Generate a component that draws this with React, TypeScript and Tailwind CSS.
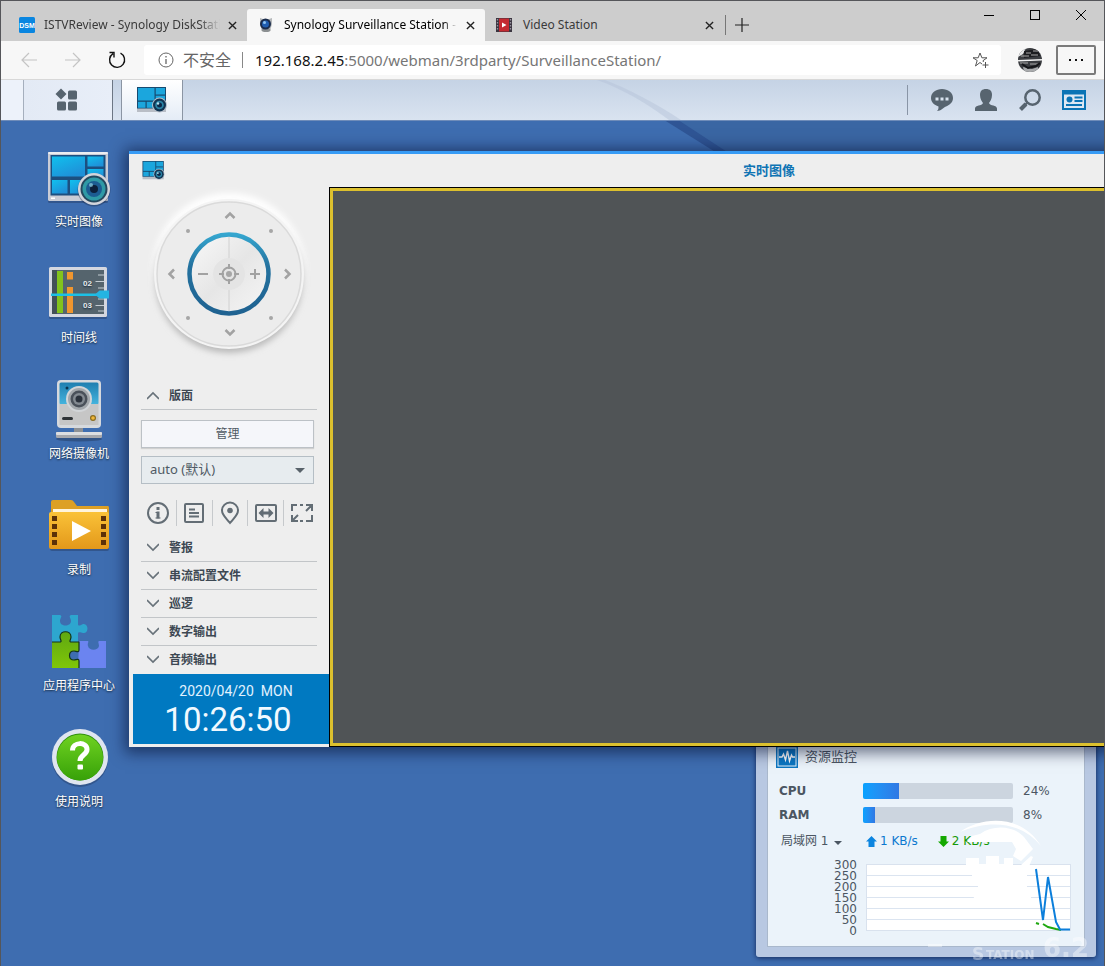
import { useState, type ReactNode } from "react";

const noto = "font-['Noto_Sans','Noto_Sans_CJK_SC',sans-serif]";
const verdana = "font-['DejaVu_Sans','Noto_Sans_CJK_SC',sans-serif]";

function CloseIcon() {
  return (
    <svg viewBox="0 0 10 10" className="h-[9px] w-[9px]" stroke="#222" strokeWidth="1.5">
      <path d="M1 1l8 8M9 1l-8 8" />
    </svg>
  );
}

function DsmIcon() {
  return (
    <svg viewBox="0 0 16 16" className="h-4 w-4 shrink-0">
      <rect width="16" height="16" rx="1.500" fill="#0a86e0" />
      <text x="8" y="10.500" textAnchor="middle" fill="#fff" className="font-['Liberation_Sans',sans-serif] text-[7px] font-bold">DSM</text>
    </svg>
  );
}

function LensIcon() {
  return (
    <svg viewBox="0 0 16 16" className="h-4 w-4 shrink-0">
      <path d="M2 1l3 1h6l3-1v6l-2 7H4L2 7z" fill="#b5b8ba" />
      <ellipse cx="8" cy="13" rx="4.500" ry="2" fill="#8c9092" />
      <circle cx="7.500" cy="7" r="5.500" fill="#1b2c4b" />
      <circle cx="7.500" cy="7" r="3.500" fill="#1f5db0" />
      <circle cx="6.500" cy="5.500" r="1.500" fill="#8fc4f2" />
    </svg>
  );
}

function FilmIcon() {
  return (
    <svg viewBox="0 0 16 14" className="h-[14px] w-4 shrink-0">
      <rect width="16" height="14" fill="#3b3540" />
      <rect x="3" y="0.500" width="10" height="13" fill="#c42a31" />
      <path d="M6 4.500v5l4.500-2.500z" fill="#fff" />
      <path d="M1.500 1v12M14.500 1v12" stroke="#9a94a0" strokeWidth="1.300" strokeDasharray="1.500 1.500" />
    </svg>
  );
}

function LiveViewArt({ className }: { className: string }) {
  return (
    <svg viewBox="0 0 64 64" className={className}>
      <defs>
        <linearGradient id="liveBlue" x1="0" y1="0" x2="0.600" y2="1">
          <stop offset="0" stopColor="#10c0ee" />
          <stop offset="1" stopColor="#1f90d8" />
        </linearGradient>
      </defs>
      <rect x="1" y="7" width="60" height="49" rx="1.500" fill="#1c2c4c" opacity="0.350" />
      <rect x="1" y="5" width="60" height="49" rx="1.500" fill="#c9ccd6" />
      <rect x="1" y="5" width="60" height="2" rx="1" fill="#eceef2" />
      <rect x="3.500" y="8" width="55" height="40.500" fill="#1c4f80" />
      <g fill="url(#liveBlue)">
        <rect x="5" y="9.500" width="33" height="20" />
        <rect x="40.500" y="9.500" width="16" height="10" />
        <rect x="40.500" y="22" width="16" height="8" />
        <rect x="5" y="33" width="15.500" height="13.500" />
        <rect x="23" y="33" width="15" height="13.500" />
      </g>
      <rect x="4" y="50.500" width="4" height="1.500" fill="#fff" />
      <circle cx="47" cy="43" r="16.500" fill="#1c2c4c" opacity="0.400" />
      <circle cx="47" cy="42" r="16" fill="#d3d5dc" />
      <circle cx="47" cy="42" r="13.500" fill="#24495f" />
      <circle cx="47" cy="42" r="11.500" fill="#2f9aa6" />
      <circle cx="47" cy="42" r="8" fill="#1c5c92" />
      <circle cx="47" cy="42" r="4" fill="#0c1f3a" />
      <circle cx="44" cy="38" r="2" fill="#a5e4ef" opacity="0.600" />
    </svg>
  );
}

function MiniLiveIcon({ className }: { className: string }) {
  return (
    <svg viewBox="0 0 30 26" className={className}>
      <rect width="29" height="25" fill="#b9bec6" />
      <rect width="29" height="21.500" fill="#174a70" />
      <g fill="#1ba6dd">
        <rect x="1" y="1" width="16.500" height="12.500" />
        <rect x="18.700" y="1" width="9.300" height="6.500" />
        <rect x="18.700" y="8.700" width="9.300" height="5" />
        <rect x="1" y="14.800" width="7.500" height="6" />
        <rect x="9.700" y="14.800" width="7.800" height="6" />
      </g>
      <circle cx="22.500" cy="18" r="7.500" fill="#b5bdc8" />
      <circle cx="22.500" cy="18" r="6.500" fill="#123452" />
      <circle cx="22.500" cy="18" r="4.300" fill="#2a84a6" />
      <circle cx="22.500" cy="18" r="2.500" fill="#0d2848" />
      <circle cx="21" cy="16.500" r="1.200" fill="#b8e2f0" />
    </svg>
  );
}

function TimelineArt() {
  return (
    <svg viewBox="0 0 64 64" className="h-16 w-16">
      <rect x="2" y="6" width="58" height="50" rx="1.500" fill="#1c2c4c" opacity="0.350" />
      <rect x="2" y="4" width="58" height="50" rx="1.500" fill="#d5d8e0" />
      <rect x="5" y="7" width="52" height="44" fill="#55646d" />
      <rect x="5" y="7" width="5" height="44" fill="#435057" />
      <rect x="10" y="8" width="6" height="42" fill="#82c31c" />
      <rect x="20" y="9" width="6" height="7.500" fill="#f0962e" />
      <rect x="20" y="24" width="6" height="26" fill="#f0962e" />
      <path d="M51 12h6M48.500 18.500h8.500M51 25h6M51 36h6M48.500 42.500h8.500M51 48h6" stroke="#c4ccd2" strokeWidth="1" />
      <rect x="4" y="30.500" width="47" height="2.500" fill="#1cc0e6" />
      <path d="M48 31.500l4.500-4h9.500v8h-9.500z" fill="#25b5e2" />
      <g fill="#e8ecee" className="font-['Liberation_Sans',sans-serif] text-[8px] font-bold">
        <text x="36" y="23">02</text>
        <text x="36" y="45">03</text>
      </g>
    </svg>
  );
}

function CameraArt() {
  return (
    <svg viewBox="0 0 64 64" className="h-16 w-16">
      <defs>
        <linearGradient id="camBlue" x1="0" y1="0" x2="0" y2="1">
          <stop offset="0" stopColor="#1f7fb0" />
          <stop offset="1" stopColor="#45b4de" />
        </linearGradient>
      </defs>
      <ellipse cx="32" cy="60" rx="23" ry="2.500" fill="#1c2c4c" opacity="0.400" />
      <rect x="27" y="46" width="9" height="9" fill="#8e9195" />
      <rect x="9" y="53" width="46" height="6" rx="1.500" fill="#a6a8ad" />
      <rect x="9" y="53" width="46" height="3" rx="1" fill="#dcdee1" />
      <rect x="10" y="1" width="44" height="48" rx="4" fill="#d6d9dd" />
      <rect x="12.500" y="3.500" width="39" height="22" rx="1.500" fill="url(#camBlue)" />
      <path d="M12.500 25h39v21h-39z" fill="#c6c6c6" />
      <circle cx="32" cy="20" r="13" fill="#d2d5d8" />
      <circle cx="32" cy="20" r="11" fill="#a3a8ac" />
      <circle cx="32" cy="20" r="8.500" fill="#4a515a" />
      <circle cx="32" cy="20" r="6" fill="#838a91" />
      <circle cx="32" cy="20" r="3.500" fill="#2b323c" />
      <circle cx="20" cy="9" r="1.500" fill="#0b3450" />
      <rect x="15" y="38" width="11" height="3" rx="1.500" fill="#2f3336" />
      <circle cx="46" cy="39" r="3" fill="#8b6c1e" />
      <circle cx="46" cy="39" r="1.800" fill="#f1b83a" />
    </svg>
  );
}

function FolderArt() {
  const holes = [21, 29, 37, 45];
  return (
    <svg viewBox="0 0 64 64" className="h-16 w-16">
      <defs>
        <linearGradient id="folder" x1="0" y1="0" x2="0" y2="1">
          <stop offset="0" stopColor="#fac238" />
          <stop offset="1" stopColor="#e3981a" />
        </linearGradient>
      </defs>
      <rect x="3" y="18" width="59" height="38" rx="2" fill="#1c2c4c" opacity="0.350" />
      <path d="M4 7q0-2 2-2h18q2 0 3 2l3 4h31q1 0 1 2v10H4z" fill="#dda025" />
      <path d="M6 14h54v5H6z" fill="#fff4dc" />
      <path d="M2 19q0-2 2-2h56q2 0 2 2v33q0 2-2 2H4q-2 0-2-2z" fill="url(#folder)" />
      {holes.map((y) => (
        <g key={y} fill="#5c3108">
          <rect x="5" y={y} width="5" height="5" />
          <rect x="54" y={y} width="5" height="5" />
        </g>
      ))}
      <path d="M25 26v20l19-10z" fill="#fff" />
    </svg>
  );
}

function PuzzleArt() {
  return (
    <svg viewBox="0 0 64 64" className="h-16 w-16">
      <defs>
        <linearGradient id="pieceGreen" x1="0" y1="0" x2="0" y2="1">
          <stop offset="0" stopColor="#5fa811" />
          <stop offset="1" stopColor="#7fc608" />
        </linearGradient>
      </defs>
      <path
        d="M5 4h8c3 1 0 3 0 6 0 6 11 6 11 0 0-3-3-5 0-6h7v9c0 3 3 1 5 0 6-1 6 10 0 9-2 0-5-2-5 1v8H5z"
        fill="#2da6cf"
      />
      <path d="M32 30h8c3 0 0 2 1 5 1 5 10 5 11 0 0-3-2-5 1-5h6v27H31z" fill="#6b84f0" />
      <path
        d="M5 31h7c4 0 1-2 1-5 0-7 11-7 11 0 0 3-3 5 1 5h7v8c0 3-3 1-5 1-6 0-6 9 0 9 2 0 5-2 5 1v7H5z"
        fill="url(#pieceGreen)"
      />
      <path d="M5 31h7c4 0 1-2 1-5 0-7 11-7 11 0 0 3-3 5 1 5h7v8c0 3-3 1-5 1-6 0-6 9 0 9 2 0 5-2 5 1v7" fill="none" stroke="#14331c" strokeWidth="1.200" />
    </svg>
  );
}

function HelpArt() {
  return (
    <svg viewBox="0 0 64 64" className="h-16 w-16">
      <defs>
        <linearGradient id="help" x1="0" y1="0" x2="0" y2="1">
          <stop offset="0" stopColor="#6fd221" />
          <stop offset="1" stopColor="#37a108" />
        </linearGradient>
      </defs>
      <circle cx="33" cy="32" r="28" fill="#1c2c4c" opacity="0.350" />
      <circle cx="33" cy="30" r="28" fill="#dfe5f0" />
      <circle cx="33" cy="30" r="23.500" fill="#2f8f0c" />
      <circle cx="33" cy="30.500" r="23" fill="url(#help)" />
      <path d="M25.500 23.500c0-9 14.500-9 14.500-1 0 5.500-7 5-7 11.500" fill="none" stroke="#fff" strokeWidth="5" />
      <rect x="30.500" y="37.500" width="5.500" height="5" rx="1" fill="#fff" />
    </svg>
  );
}

const desktopApps: { label: string; art: ReactNode }[] = [
  { label: "实时图像", art: <LiveViewArt className="h-16 w-16" /> },
  { label: "时间线", art: <TimelineArt /> },
  { label: "网络摄像机", art: <CameraArt /> },
  { label: "录制", art: <FolderArt /> },
  { label: "应用程序中心", art: <PuzzleArt /> },
  { label: "使用说明", art: <HelpArt /> },
];

function TabStrip() {
  return (
    <div className="flex h-[40px] items-end bg-[#cdcdcd] text-[12px] text-[#3a3a3a]">
      <div role="tablist" className="flex h-8 items-center">
        <div className="flex w-[246px] items-center pl-[18px] pr-[10px]">
          <DsmIcon />
          <button role="tab" aria-selected="false" className="ml-[9px] min-w-0 flex-1 overflow-hidden whitespace-nowrap text-left [mask-image:linear-gradient(to_right,black_88%,transparent)]">
            ISTVReview - Synology DiskStatic
          </button>
          <button aria-label="关闭标签页" className="ml-[8px]"><CloseIcon /></button>
        </div>
        <div className="flex h-full w-[238px] items-center rounded-t-[3px] bg-[#f7f7f7] pl-[11px] pr-[10px] text-black">
          <LensIcon />
          <button role="tab" aria-selected="true" className="ml-[10px] min-w-0 flex-1 overflow-hidden whitespace-nowrap text-left [mask-image:linear-gradient(to_right,black_92%,transparent)]">
            Synology Surveillance Station - IS
          </button>
          <button aria-label="关闭标签页" className="ml-[9px]"><CloseIcon /></button>
        </div>
        <div className="flex w-[241px] items-center pl-[11px]">
          <FilmIcon />
          <button role="tab" aria-selected="false" className="ml-[11px] flex-1 text-left">Video Station</button>
          <button aria-label="关闭标签页"><CloseIcon /></button>
          <span className="ml-[11px] h-5 w-px bg-[#777]" />
        </div>
      </div>
      <button aria-label="新建标签页" className="mb-[9px] ml-[9px]">
        <svg viewBox="0 0 14 14" className="h-[14px] w-[14px]" stroke="#222"><path d="M7 0v14M0 7h14" strokeWidth="1.200" /></svg>
      </button>
      <div className="ml-auto flex self-start pt-[8px]">
        <button aria-label="最小化" className="flex w-[46px] justify-center">
          <svg viewBox="0 0 12 12" className="h-3 w-3" stroke="#000"><path d="M1 6.500h10" /></svg>
        </button>
        <button aria-label="最大化" className="flex w-[46px] justify-center">
          <svg viewBox="0 0 12 12" className="h-3 w-3" stroke="#000" fill="none"><rect x="1.500" y="1.500" width="9" height="9" /></svg>
        </button>
        <button aria-label="关闭" className="flex w-[46px] justify-center">
          <svg viewBox="0 0 12 12" className="h-3 w-3" stroke="#000"><path d="M1 1l10 10M11 1L1 11" /></svg>
        </button>
      </div>
    </div>
  );
}

function AddressBar() {
  return (
    <div className="flex h-[39px] items-center border-b border-[#d8d8d8] bg-[#f7f7f7] pr-[8px]">
      <button aria-label="后退" className="ml-[20px]">
        <svg viewBox="0 0 16 16" className="h-4 w-4" fill="none" stroke="#c4c4c4" strokeWidth="1.200"><path d="M16 8H1M8 1L1 8l7 7" /></svg>
      </button>
      <button aria-label="前进" className="ml-[28px]">
        <svg viewBox="0 0 16 16" className="h-4 w-4" fill="none" stroke="#c4c4c4" strokeWidth="1.200"><path d="M0 8h15M8 1l7 7-7 7" /></svg>
      </button>
      <button aria-label="刷新" className="ml-[27px]">
        <svg viewBox="0 0 18 18" className="h-[18px] w-[18px]" fill="none" stroke="#111" strokeWidth="1.400">
          <path d="M12.500 2.200A7.500 7.500 0 1 1 5 2.600M1.500 1.500h4.500v5" />
        </svg>
      </button>
      <div className="ml-[18px] flex h-[30px] min-w-0 flex-1 items-center rounded-[3px] bg-white pl-[14px] pr-[12px]">
        <svg viewBox="0 0 16 16" className="h-4 w-4 shrink-0" fill="none" stroke="#666">
          <circle cx="8" cy="8" r="7" /><path d="M8 7v5M8 4v1.500" strokeWidth="1.300" />
        </svg>
        <span className="ml-[9px] whitespace-nowrap text-[16px] text-[#666]">不安全</span>
        <span className="ml-[11px] h-4 w-px bg-[#888]" />
        <a href="#address" className="ml-[12px] flex-1 overflow-hidden whitespace-nowrap text-[15px] text-[#767676]">
          <span className="text-[#111]">192.168.2.45</span>:5000/webman/3rdparty/SurveillanceStation/
        </a>
        <button aria-label="收藏">
          <svg viewBox="0 0 17 17" className="h-[17px] w-[17px]" fill="none" stroke="#555">
            <path d="M10 12L8 10.500 3.500 14l1.700-5.500L1 5.800h5.200L8 1l1.900 4.800H15L11 8.700l.4 1.300M13.500 10v6M10.500 13h6" />
          </svg>
        </button>
      </div>
      <button aria-label="用户" className="ml-[17px]">
        <svg viewBox="0 0 24 24" className="h-6 w-6">
          <defs><clipPath id="avatar"><circle cx="12" cy="12" r="12" /></clipPath></defs>
          <g clipPath="url(#avatar)">
            <rect width="24" height="24" fill="#3a3c40" />
            <path d="M0 0h8L5 6 0 9zM20 0h4v9l-2-5z" fill="#e8e9ea" />
            <path d="M6 3l14-2 2 7-16 2z" fill="#1c1d20" />
            <path d="M8 5h5M15 3h5M3 8h8M13 7h7M2 15h8M12 16h9" stroke="#a8a8a8" />
            <path d="M0 12l24-1v1.500L0 13.500z" fill="#f2f2f2" />
            <path d="M5 19l9 2 6-2v5H6z" fill="#a9abad" />
            <path d="M4 16l6 4 8-2 4-3" stroke="#141518" strokeWidth="2" fill="none" />
          </g>
        </svg>
      </button>
      <button aria-label="更多" className="ml-[14px] flex h-[30px] w-[40px] items-center justify-center rounded-[2px] border-2 border-[#7b7b7b]">
        <svg viewBox="0 0 16 4" className="h-1 w-4" fill="#111"><path d="M1 1h2v2H1zM7 1h2v2H7zM13 1h2v2h-2z" /></svg>
      </button>
    </div>
  );
}

function TaskBar() {
  return (
    <div className="relative flex h-[41px] items-center border-b border-[#6f8cb9] bg-linear-to-b from-[#c5d3e5] to-[#d9e3f0]">
      <svg viewBox="0 0 100 40" className="absolute left-[590px] top-0 h-10 w-[100px]"><path d="M6 0h8c24 9 52 24 76 40H78C55 23 32 9 6 0z" fill="#b3c2d8" opacity="0.450" /></svg>
      <div className="h-full w-[23px] border-r border-[#a5afbd] bg-[#edf2fa]" />
      <button aria-label="主菜单" className="flex h-full w-[89px] items-center justify-center border-r border-[#6c7684] bg-linear-to-r from-[#e3eaf5] to-[#e8eef8] pr-[4px]">
        <svg viewBox="0 0 24 24" className="h-6 w-6" fill="#57646f">
          <path d="M7 0.500l5.500 5.500-5.500 5.500-5.500-5.500z" /><rect x="14" y="2.500" width="9" height="9" rx="1.500" /><rect x="3" y="13.500" width="9" height="9" rx="1.500" /><rect x="14" y="13.500" width="9" height="9" rx="1.500" />
        </svg>
      </button>
      <button aria-label="实时图像" className="ml-[8px] flex h-full w-[62px] items-center justify-center border-x border-x-[#8b95a3] bg-linear-to-b from-white to-[#e4ecf6]">
        <MiniLiveIcon className="h-[26px] w-[30px]" />
      </button>
      <div className="ml-auto mr-[18px] flex items-center gap-[22px]">
        <span className="h-[30px] w-px bg-[#8995a6]" />
        <button aria-label="通知" className="ml-px">
          <svg viewBox="0 0 22 22" className="h-[22px] w-[22px]">
            <path d="M11 0c6 0 11 3.500 11 9 0 5-4 7-7 8.500-3 1.500-5 4.500-9 4.500 1.500-1 1.500-3 1.500-4.500C3 16 0 13 0 9c0-5.500 5-9 11-9z" fill="#57646f" />
            <path d="M4.500 8.500h3v3h-3zM9.500 8.500h3v3h-3zM14.500 8.500h3v3h-3z" fill="#d8e2ee" />
          </svg>
        </button>
        <button aria-label="个人设置">
          <svg viewBox="0 0 22 22" className="h-[22px] w-[22px]" fill="#57646f">
            <path d="M11 0c4 0 6 2 6 6s-2 6.500-3 8c1 3 8 2 8 5.500V22H0v-2.500C0 16 7 17 8 14c-1-1.500-3-4-3-8s2-6 6-6z" />
          </svg>
        </button>
        <button aria-label="搜索">
          <svg viewBox="0 0 22 22" className="h-[22px] w-[22px]" fill="none" stroke="#57646f">
            <circle cx="13.500" cy="8.500" r="7.200" strokeWidth="2.500" /><path d="M7 15l-5.500 5.500" strokeWidth="4" /><path d="M9 13l-3 3" strokeWidth="2" />
          </svg>
        </button>
        <button aria-label="小工具" className="-ml-px">
          <svg viewBox="0 0 24 20" className="h-5 w-6">
            <rect width="24" height="20" fill="#0b74b5" /><rect x="2" y="4.500" width="20" height="13.500" fill="#dde8f3" />
            <circle cx="7.500" cy="9.500" r="3" fill="#0b74b5" />
            <path d="M12.500 7.500h8M12.500 11h8M4 15h16" stroke="#0b74b5" strokeWidth="1.800" />
          </svg>
        </button>
      </div>
    </div>
  );
}

function PtzDial() {
  return (
    <svg viewBox="0 0 196 180" className="h-[180px] w-[196px]">
      <defs>
        <linearGradient id="ring" x1="0" y1="0" x2="0" y2="1">
          <stop offset="0" stopColor="#35a6cf" /><stop offset="0.400" stopColor="#24729f" /><stop offset="1" stopColor="#1f6291" />
        </linearGradient>
        <linearGradient id="knob" x1="0" y1="0" x2="1" y2="1">
          <stop offset="0" stopColor="#f9f9f9" /><stop offset="0.500" stopColor="#e6e6e6" /><stop offset="1" stopColor="#f6f6f6" />
        </linearGradient>
        <filter id="soft" x="-20%" y="-20%" width="140%" height="140%"><feGaussianBlur stdDeviation="3" /></filter>
      </defs>
      <circle cx="96" cy="82" r="76" fill="#fff" filter="url(#soft)" />
      <circle cx="96" cy="92" r="74" fill="#b9b9b9" filter="url(#soft)" />
      <circle cx="96" cy="87" r="75" fill="#f4f4f4" />
      <circle cx="96" cy="87" r="72" fill="#ececec" stroke="#dadada" strokeWidth="1.500" />
      <circle cx="96" cy="87" r="39.500" fill="url(#knob)" stroke="url(#ring)" strokeWidth="4.500" />
      <path d="M96 50v74" stroke="#d0d0d0" />
      <circle cx="96" cy="87" r="16" fill="#e4e4e4" />
      <g fill="none" stroke="#a2a2a2" strokeWidth="2">
        <circle cx="96" cy="87" r="6.500" />
        <path d="M96 77v5M96 92v5M86 87h5M101 87h5M65 87h10M117 87h10M122 82v10" />
        <path strokeWidth="2.500" d="M92.500 31l4.500-4.500 4.500 4.500M92.500 143l4.500 4.500 4.500-4.500M41 82.500L36.500 87l4.500 4.500M152 82.500l4.500 4.500-4.500 4.500" />
      </g>
      <g fill="#a6a6a6">
        <circle cx="96" cy="87" r="3" /><circle cx="55" cy="44" r="2" /><circle cx="138" cy="44" r="2" /><circle cx="55" cy="131" r="2" /><circle cx="138" cy="131" r="2" />
      </g>
    </svg>
  );
}

function SectionHeader({ label, open, last }: { label: string; open?: boolean; last?: boolean }) {
  return (
    <button
      aria-expanded={!!open}
      className={`flex h-[28px] w-[176px] items-center pl-[6px] text-[12px] font-bold text-[#3d4853] ${last ? "" : "border-b border-[#c2c5c8]"}`}
    >
      <svg viewBox="0 0 12 12" className="h-3 w-3" fill="none" stroke="#68727a" strokeWidth="1.600">
        <path d={open ? "M0 9l6-6 6 6" : "M0 2l6 6 6-6"} />
      </svg>
      <span className="ml-[10px]">{label}</span>
    </button>
  );
}

const tools: { label: string; icon: ReactNode }[] = [
  { label: "信息", icon: <><circle cx="12" cy="12" r="10" /><path d="M12 10.500v7M12 6v3" strokeWidth="3" /><path d="M9.500 11.500h2M9.500 17h5" strokeWidth="1.200" /></> },
  { label: "日志", icon: <><rect x="3" y="3" width="18" height="18" rx="1" /><path d="M7 8.500h6M7 12h10M7 15.500h10" /></> },
  { label: "电子地图", icon: <><path d="M12 22C8 17 4 14 4 9.500a8 8 0 0 1 16 0C20 14 16 17 12 22z" /><circle cx="12" cy="9.500" r="2.800" fill="#636d75" stroke="none" /></> },
  { label: "适应宽度", icon: <><rect x="2" y="4" width="20" height="16" rx="1" /><path d="M4.500 12l5-5v3.500h5V7l5 5-5 5v-3.500h-5V17z" fill="#636d75" stroke="none" /></> },
  { label: "全屏", icon: <><path d="M2 10V4h5M10 4h3M16 4h6v6M22 14v6h-6M13 20h-3M8 20H2v-6M21 5l-5 5M3 19l5-5" /></> },
];

function Sidebar() {
  const [layout, setLayout] = useState("auto");
  return (
    <div className="flex w-[200px] shrink-0 flex-col pb-[3px]">
      <div className="pl-1"><PtzDial /></div>
      <div className="flex flex-col pl-[12px]">
        <div className="pt-[15px]"><SectionHeader label="版面" open /></div>
        <button className="mt-[10px] h-[28px] w-[173px] border border-[#bcc1c6] bg-[#f5f6fa] text-[12px] text-[#505a64] shadow-[0_1px_1px_#d0d0d0]">管理</button>
        <label className="relative mt-[8px] block h-[28px] w-[173px]">
          <span className="sr-only">版面</span>
          <select value={layout} onChange={(e) => setLayout(e.target.value)} className="h-full w-full appearance-none border border-[#b5bec5] bg-[#e7ecef] pl-[8px] text-[13px] text-[#505a64]">
            <option value="auto">auto (默认)</option>
          </select>
          <svg viewBox="0 0 10 5" className="pointer-events-none absolute right-[9px] top-[12px] h-[5px] w-[10px]" fill="#58626a"><path d="M0 0h10L5 5z" /></svg>
        </label>
        <div className="mt-[16px] flex h-[26px] w-[178px] divide-x divide-[#c6c9cc]">
          {tools.map((tool) => (
            <button key={tool.label} aria-label={tool.label} className="flex flex-1 items-center justify-center">
              <svg viewBox="0 0 24 24" className="h-6 w-6" fill="none" stroke="#636d75" strokeWidth="2">{tool.icon}</svg>
            </button>
          ))}
        </div>
        <div className="flex flex-col pt-[8px]">
          <SectionHeader label="警报" />
          <SectionHeader label="串流配置文件" />
          <SectionHeader label="巡逻" />
          <SectionHeader label="数字输出" />
          <SectionHeader label="音频输出" last />
        </div>
      </div>
      <div className="ml-1 flex flex-col items-center bg-[#0079c1] pb-[5px] pt-[7px] font-['Roboto',sans-serif] text-[#e0f2ff]">
        <time className="ml-[10px] whitespace-pre text-[14px] leading-[20px]">2020/04/20  MON</time>
        <time className="mr-[6px] whitespace-nowrap text-[33px] leading-[38px] text-[#f0f9ff]">10:26:50</time>
      </div>
    </div>
  );
}

function LiveViewWindow() {
  return (
    <section aria-label="实时图像" className="absolute left-[128px] top-[30px] z-10 w-[1280px] border-t-[3px] border-[#379bf5] bg-[#eeeeee] shadow-[0_2px_14px_4px_rgba(0,10,40,0.55)]">
      <header className="flex h-[33px] items-center">
        <MiniLiveIcon className="ml-[13px] h-[19px] w-[23px]" />
        <h1 className="flex-1 pr-[36px] text-center text-[13px] font-bold text-[#0f74b4]">实时图像</h1>
      </header>
      <div className="flex">
        <Sidebar />
        <div className="flex-1 border border-black bg-[#505456]">
          <div className="h-full border-[3px] border-[#dcc02e]" />
        </div>
      </div>
    </section>
  );
}

function Meter({ label, value }: { label: string; value: number }) {
  return (
    <div className="flex h-6 items-center">
      <span className="w-[84px] font-bold">{label}</span>
      <div role="progressbar" aria-label={label} aria-valuenow={value} className="h-4 w-[150px] overflow-hidden rounded-[2px] bg-[#ccd5df]">
        <div className="h-full bg-linear-to-r from-[#06a2ff] to-[#2f78e4]" style={{ width: `${value}%` }} />
      </div>
      <span className="ml-[10px]">{value}%</span>
    </div>
  );
}

function ResourceWidget() {
  const ticks = [300, 250, 200, 150, 100, 50, 0];
  return (
    <aside className={`absolute bottom-[9px] right-[8px] w-[340px] rounded-[3px] bg-[#bfcee5]/95 px-[11px] pb-[10px] shadow-[0_1px_5px_rgba(0,10,50,0.7)] ${verdana}`}>
      <div className="border border-[#a9b8cc] bg-[#ebf3fa] px-[11px] pb-[9px] text-[12px] text-[#4b5662]">
        <div className="flex h-[49px] items-end pb-[7px]">
          <svg viewBox="0 0 22 22" className="-ml-[3px] h-[22px] w-[22px]">
            <rect width="22" height="22" fill="#0b76c2" /><rect x="2" y="2" width="18" height="18" fill="none" stroke="#e9f3fb" />
            <path d="M3 11h3l1.500-3 2 6 2-9 2 10 2-6 1 2H19" fill="none" stroke="#fff" strokeWidth="1.400" />
          </svg>
          <h2 className="ml-[7px] text-[13px] leading-[22px]">资源监控</h2>
        </div>
        <div className="pt-[4px]">
          <Meter label="CPU" value={24} />
          <Meter label="RAM" value={8} />
        </div>
        <div className="flex h-[28px] items-center">
          <button className="flex w-[87px] items-center pl-[2px]">
            局域网 1
            <svg viewBox="0 0 8 4" className="ml-[6px] mt-1 h-1 w-2" fill="#4b5662"><path d="M0 0h8L4 4z" /></svg>
          </button>
          <svg viewBox="0 0 11 11" className="h-[11px] w-[11px]" fill="#0c85e0"><path d="M5.500 0L11 5.500H8.500V11h-6V5.500H0z" /></svg>
          <span className="ml-[3px] text-[#0b78cf]">1 KB/s</span>
          <svg viewBox="0 0 11 11" className="ml-[20px] h-[11px] w-[11px]" fill="#14a800"><path d="M5.500 11L0 5.500h2.500V0h6v5.500H11z" /></svg>
          <span className="ml-[3px] text-[#169a06]">2 KB/s</span>
        </div>
        <div className="flex">
          <div className="flex w-[78px] flex-col pt-[5px] text-right">
            {ticks.map((t) => <span key={t} className="h-[11px] leading-[11px]">{t}</span>)}
          </div>
          <svg viewBox="0 0 206 82" className="ml-[9px] h-[82px] w-[206px]" fill="none">
            <rect x="0.500" y="9.500" width="204" height="66" fill="#fff" stroke="#d9e2ee" />
            <path d="M1 20.500h203M1 31.500h203M1 42.500h203M1 53.500h203M1 64.500h203" stroke="#dbe4f0" />
            <path d="M170 68l3 1M177 69l5 3 8 2 5 1" stroke="#20a810" strokeWidth="2" />
            <path d="M170 14l7 51 5-43 8 45 4 7.500h10" stroke="#0c7fdb" strokeWidth="2" />
          </svg>
        </div>
      </div>
    </aside>
  );
}

function Watermark() {
  return (
    <svg viewBox="0 0 180 150" className="pointer-events-none absolute bottom-0 right-0 z-20 h-[150px] w-[180px]">
      <g fill="#fff">
        <path d="M36 16C58 0 98-2 117 30 98 6 66 3 36 16z" />
        <path d="M56 18c14-10 34-8 44 3l9 12-12 12-8-5 3-7-4-7H43l5-6z" />
        <path d="M42 42h13v6h7v-8h13v8h5v-6h9v7h8l10-9 2 1-6 14v18l4 3v6H97l4 6H53l-5-4 6-8v-8H42l6-6V58h-6z" />
        <path d="M34 99h76v3H36zM44 112h66v2H44z" opacity="0.800" />
        <rect x="4" y="128" width="14" height="3" opacity="0.400" />
      </g>
      <g fill="#fff" opacity="0.400" className="font-['DejaVu_Sans',sans-serif] font-bold">
        <text x="48" y="144" className="text-[17px]">S</text>
        <text x="62" y="143" className="text-[12px]">TATION</text>
        <text x="119" y="141" className="text-[26px]">6.2</text>
      </g>
    </svg>
  );
}

export default function App() {
  return (
    <div className={`flex min-h-screen flex-col border border-b-0 border-[#55565a] ${noto}`}>
      <TabStrip />
      <AddressBar />
      <TaskBar />
      <main className="relative min-h-[845px] flex-1 overflow-hidden bg-[#3e6db0]">
        <svg viewBox="0 0 1105 845" preserveAspectRatio="none" className="absolute inset-0 h-full w-full">
          <path d="M670 0L724 30H1105V0z" fill="#3a66a3" />
          <path d="M666 0h14l46 30h-12z" fill="#2f5595" />
        </svg>
        <nav aria-label="桌面" className="relative flex w-[156px] flex-col items-center pt-[26px]">
          {desktopApps.map((app) => (
            <a key={app.label} href="#app" className="flex h-[116px] flex-col items-center text-[12px] leading-[22px] text-white [text-shadow:0_1px_2px_#123]">
              {app.art}
              <span>{app.label}</span>
            </a>
          ))}
        </nav>
        <ResourceWidget />
        <LiveViewWindow />
        <Watermark />
      </main>
    </div>
  );
}
